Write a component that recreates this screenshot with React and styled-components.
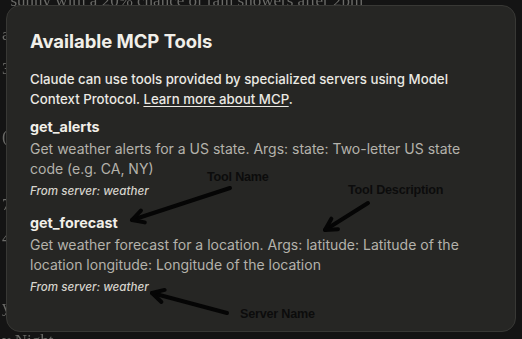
import React from 'react';
import styled, { createGlobalStyle } from 'styled-components';

const GlobalStyle = createGlobalStyle`
  html, body {
    margin: 0;
    padding: 0;
    background: #141414;
  }
  #root {
    width: 522px;
    height: 339px;
  }
`;

const Page = styled.div`
  position: relative;
  width: 522px;
  height: 339px;
  overflow: hidden;
  background: #141414;
`;

const Backdrop = styled.div`
  display: flex;
  flex-direction: column;
  gap: 14px;
  padding: 0 0 0 2px;
  margin-top: -9px;
  font-family: "Liberation Serif", "DejaVu Serif", serif;
  font-size: 17px;
  color: #6b6b68;
  filter: blur(0.4px);
`;

const BackLine = styled.div`
  white-space: nowrap;
  line-height: 20px;
`;

const Dialog = styled.section`
  position: absolute;
  left: 6px;
  top: 5px;
  width: 510px;
  height: 327px;
  box-sizing: border-box;
  padding: 23px 32px 0 23px;
  background: #262624;
  border: 1px solid #383835;
  border-radius: 14px;
  font-family: Inter, "Noto Sans", sans-serif;
  display: flex;
  flex-direction: column;
`;

const Title = styled.h2`
  margin: 0 0 16px;
  font-size: 18.5px;
  line-height: 24px;
  font-weight: 700;
  color: #f1efe9;
  letter-spacing: -0.05px;
`;

const Intro = styled.p`
  margin: 0 0 8px;
  font-size: 13.25px;
  line-height: 20px;
  font-weight: 500;
  color: #ebe9e3;
`;

const LearnLink = styled.a`
  color: #ebe9e3;
  text-decoration: underline;
  text-underline-offset: 2px;
`;

const ToolList = styled.div`
  display: flex;
  flex-direction: column;
  gap: 12px;
`;

const Tool = styled.div`
  display: flex;
  flex-direction: column;
`;

const ToolName = styled.div`
  margin-bottom: 2px;
  font-size: 14.3px;
  line-height: 20px;
  font-weight: 700;
  color: #f1efe9;
`;

const ToolDesc = styled.div`
  font-size: 14px;
  line-height: 20px;
  color: #b4b2ab;
`;

const ToolServer = styled.div`
  margin-top: 2px;
  font-size: 11.6px;
  line-height: 20px;
  font-style: italic;
  font-weight: 500;
  color: #d6d4cd;
`;

const Note = styled.span`
  position: absolute;
  left: ${(p) => p.$x}px;
  top: ${(p) => p.$y}px;
  font-family: "Liberation Sans", "DejaVu Sans", sans-serif;
  font-size: 12.6px;
  font-weight: 700;
  color: #0c0c0c;
  white-space: nowrap;
  letter-spacing: -0.2px;
`;

const Arrows = styled.svg`
  position: absolute;
  left: 0;
  top: 0;
  pointer-events: none;
`;

const tools = [
  {
    name: 'get_alerts',
    desc: 'Get weather alerts for a US state. Args: state: Two-letter US state code (e.g. CA, NY)',
    server: 'weather',
  },
  {
    name: 'get_forecast',
    desc: 'Get weather forecast for a location. Args: latitude: Latitude of the location longitude: Longitude of the location',
    server: 'weather',
  },
];

function Arrow({ x1, y1, x2, y2 }) {
  const ang = Math.atan2(y2 - y1, x2 - x1);
  const len = 13;
  const spread = 0.5;
  const ax = x2 - len * Math.cos(ang - spread);
  const ay = y2 - len * Math.sin(ang - spread);
  const bx = x2 - len * Math.cos(ang + spread);
  const by = y2 - len * Math.sin(ang + spread);
  return (
    <g stroke="#050505" strokeWidth="4" strokeLinecap="round" strokeLinejoin="round" fill="none">
      <line x1={x1} y1={y1} x2={x2} y2={y2} />
      <polyline points={`${ax},${ay} ${x2},${y2} ${bx},${by}`} />
    </g>
  );
}

export default function App() {
  return (
    <Page>
      <GlobalStyle />
      <Backdrop>
        <BackLine>&nbsp;&nbsp;sunny with a 20% chance of rain showers after 2pm</BackLine>
        <BackLine>a</BackLine>
        <BackLine>3</BackLine>
        <BackLine>&nbsp;</BackLine>
        <BackLine>(</BackLine>
        <BackLine>&nbsp;</BackLine>
        <BackLine>7</BackLine>
        <BackLine>4</BackLine>
        <BackLine>&nbsp;</BackLine>
        <BackLine>y</BackLine>
        <BackLine>y Night</BackLine>
      </Backdrop>

      <Dialog>
        <Title>Available MCP Tools</Title>
        <Intro>
          Claude can use tools provided by specialized servers using Model Context Protocol.{' '}
          <LearnLink href="#mcp">Learn more about MCP</LearnLink>.
        </Intro>
        <ToolList>
          {tools.map((t) => (
            <Tool key={t.name}>
              <ToolName>{t.name}</ToolName>
              <ToolDesc>{t.desc}</ToolDesc>
              <ToolServer>From server: {t.server}</ToolServer>
            </Tool>
          ))}
        </ToolList>
      </Dialog>

      <Note $x={207} $y={170}>Tool Name</Note>
      <Note $x={348} $y={183}>Tool Description</Note>
      <Note $x={240} $y={307}>Server Name</Note>

      <Arrows width="522" height="339" viewBox="0 0 522 339">
        <Arrow x1={230} y1={188} x2={132} y2={220} />
        <Arrow x1={368} y1={203} x2={325} y2={230} />
        <Arrow x1={227} y1={313} x2={152} y2={293} />
      </Arrows>
    </Page>
  );
}
